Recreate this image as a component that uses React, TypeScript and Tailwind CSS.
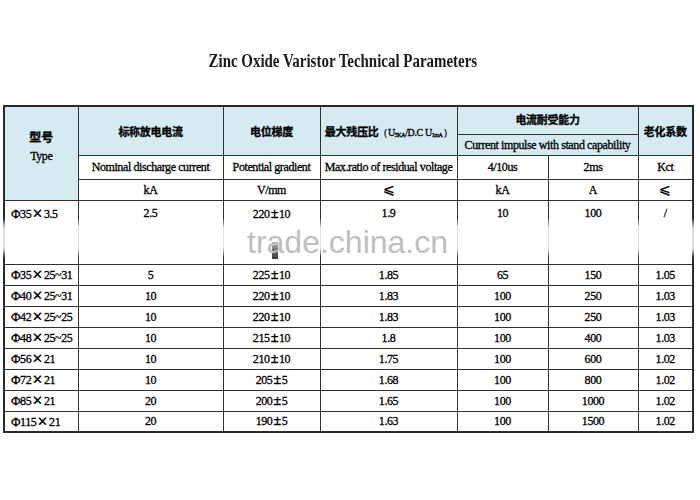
const serif = "font-['Liberation_Serif','Times_New_Roman',serif]"
const cjk = "font-['Noto_Sans_CJK_SC','Noto_Sans',sans-serif] font-bold"

const rows = [
  ["35", "3.5", "2.5", "220", "10", "1.9", "10", "100", "/"],
  ["35", "25~31", "5", "225", "10", "1.85", "65", "150", "1.05"],
  ["40", "25~31", "10", "220", "10", "1.83", "100", "250", "1.03"],
  ["42", "25~25", "10", "220", "10", "1.83", "100", "250", "1.03"],
  ["48", "25~25", "10", "215", "10", "1.8", "100", "400", "1.03"],
  ["56", "21", "10", "210", "10", "1.75", "100", "600", "1.02"],
  ["72", "21", "10", "205", "5", "1.68", "100", "800", "1.02"],
  ["85", "21", "20", "200", "5", "1.65", "100", "1000", "1.02"],
  ["115", "21", "20", "190", "5", "1.63", "100", "1500", "1.02"],
]

const cell = "border border-[#2f2f2f] p-0 text-center align-middle"
const head = cell + " bg-[#d6eaf2]"

export default function App() {
  return (
    <div className={`relative h-[500px] w-[700px] overflow-hidden bg-white text-black ${serif}`}>
      <div className="flex h-[105px] justify-center pr-[14px] pt-[50px]">
        <h1 className="inline-block h-[22px] scale-x-[0.83] text-[18px] font-bold leading-[22px] text-[#1a1a1a]">
          Zinc Oxide Varistor Technical Parameters
        </h1>
      </div>

      <div className="pl-[3px]">
        <table className="w-[689px] table-fixed border-collapse border-2 border-[#2a2a2a] text-[12px] leading-none tracking-[-0.4px] [-webkit-text-stroke:0.3px_#000]">
          <colgroup>
            <col className="w-[74px]" />
            <col className="w-[145px]" />
            <col className="w-[97px]" />
            <col className="w-[137px]" />
            <col className="w-[91px]" />
            <col className="w-[90px]" />
            <col className="w-[55px]" />
          </colgroup>
          <thead>
            <tr className="h-[28px]">
              <td rowSpan={4} className={head + " pb-[14px]"}>
                <div className={`${cjk} text-[12px] tracking-normal`}>型号</div>
                <div className="mt-[7px] text-[12px]">Type</div>
              </td>
              <td rowSpan={2} className={head + " pt-[2px]"}>
                <span className={`${cjk} text-[11px] tracking-[-0.3px]`}>标称放电电流</span>
              </td>
              <td rowSpan={2} className={head + " pt-[2px]"}>
                <span className={`${cjk} text-[11px] tracking-[-0.3px]`}>电位梯度</span>
              </td>
              <td rowSpan={2} className={head + " pt-[2px] whitespace-nowrap"}>
                <span className={`${cjk} text-[11px] tracking-[-0.3px]`}>最大残压比</span>
                <span className="text-[10px]">
                  （U<sub className="text-[6px]">5KA</sub>/D.C U<sub className="text-[6px]">1mA</sub>）
                </span>
              </td>
              <td colSpan={2} className={head}>
                <span className={`${cjk} text-[11px] tracking-[-0.3px]`}>电流耐受能力</span>
              </td>
              <td rowSpan={2} className={head + " pt-[2px]"}>
                <span className={`${cjk} text-[11px] tracking-[-0.3px]`}>老化系数</span>
              </td>
            </tr>
            <tr className="h-[21px]">
              <td colSpan={2} className={head + " whitespace-nowrap"}>
                Current impulse with stand capability
              </td>
            </tr>
            <tr className="h-[24px]">
              <td className={cell + " whitespace-nowrap"}>Nominal discharge current</td>
              <td className={cell + " whitespace-nowrap"}>Potential gradient</td>
              <td className={cell + " whitespace-nowrap"}>Max.ratio of residual voltage</td>
              <td className={cell}>4/10us</td>
              <td className={cell}>2ms</td>
              <td className={cell}>Kct</td>
            </tr>
            <tr className="h-[21px]">
              <td className={cell}>kA</td>
              <td className={cell}>V/mm</td>
              <td className={cell + " text-[14px]"}>⩽</td>
              <td className={cell}>kA</td>
              <td className={cell}>A</td>
              <td className={cell + " text-[14px]"}>⩽</td>
            </tr>
          </thead>
          <tbody>
            {rows.map(([d, l, ka, g, tol, ratio, imp, ms, kct], i) => {
              const td =
                "border border-[#2f2f2f] p-0 " +
                (i === 0 ? "align-top pt-[6px] " : "align-middle ")
              return (
                <tr key={i} className={i === 0 ? "h-[64px]" : "h-[21px]"}>
                  <td className={td + "pl-[6px] text-left whitespace-nowrap"}>
                    <span className="text-[13px]">Φ</span>
                    {d}
                    <span className="px-[1px] text-[13px]">✕</span>
                    {l}
                  </td>
                  <td className={td + "text-center"}>{ka}</td>
                  <td className={td + "text-center"}>
                    {g}
                    <span className="px-[1px] text-[14px] font-bold">±</span>
                    {tol}
                  </td>
                  <td className={td + "text-center"}>{ratio}</td>
                  <td className={td + "text-center"}>{imp}</td>
                  <td className={td + "text-center"}>{ms}</td>
                  <td className={td + "text-center"}>{kct}</td>
                </tr>
              )
            })}
          </tbody>
        </table>
      </div>

      {/* watermark over the first data row */}
      <div className="absolute left-0 top-[218px] h-[40px] w-[700px] bg-[linear-gradient(to_bottom,rgba(255,255,255,0),rgba(255,255,255,0.85)_25%,rgba(255,255,255,0.85)_75%,rgba(255,255,255,0))]" />
      <div className="absolute left-[272px] top-[242px] h-[17px] w-[6px] bg-gradient-to-b from-[#b0b0b0] to-[#3a3a3a] blur-[0.5px]" />
      <div className="absolute left-[247px] top-[226px] font-['Liberation_Sans',Arial,sans-serif] text-[32px] leading-none text-[#bfbfbf]">
        trade.china.cn
      </div>
    </div>
  )
}
